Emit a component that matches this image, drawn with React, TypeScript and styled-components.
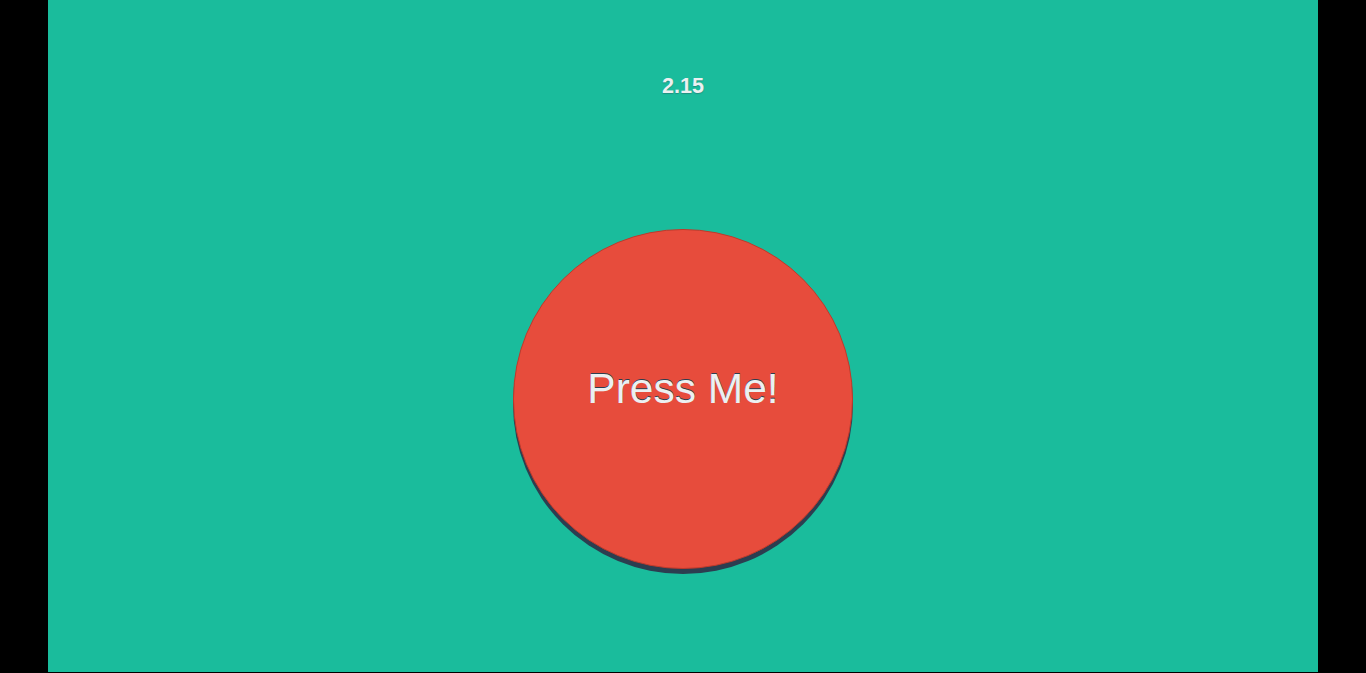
import React from "react";
import styled, { createGlobalStyle } from "styled-components";

const Global = createGlobalStyle`
  html, body { margin: 0; padding: 0; background: #000; }
  body { font-family: "Liberation Sans", Arial, sans-serif; }
`;

const Stage = styled.main`
  width: 1270px;
  height: 672px;
  margin: 0 auto;
  background: #1abc9c;
  display: flex;
  flex-direction: column;
  align-items: center;
  box-sizing: border-box;
  padding-top: 73px;
`;

const Timer = styled.div`
  font-size: 21.5px;
  line-height: 26px;
  font-weight: bold;
  color: #ecf0f1;
  text-shadow: 0 1px 1px rgba(44, 62, 80, 0.35);
`;

const BigButton = styled.button`
  margin-top: 130px;
  width: 340px;
  height: 340px;
  border-radius: 50%;
  background: #e74c3c;
  border: 1px solid #c0392b;
  box-shadow: 0 5px 0 #2c3e50;
  display: flex;
  align-items: center;
  justify-content: center;
  padding: 0 0 20px;
  box-sizing: border-box;
  cursor: pointer;
  font-family: "Liberation Sans", Arial, sans-serif;
  font-size: 42.5px;
  color: #ecf0f1;
  text-shadow: 0 -1px 0 #2c3e50;
`;

export default function App() {
  return (
    <>
      <Global />
      <Stage>
        <Timer>2.15</Timer>
        <BigButton>Press Me!</BigButton>
      </Stage>
    </>
  );
}
